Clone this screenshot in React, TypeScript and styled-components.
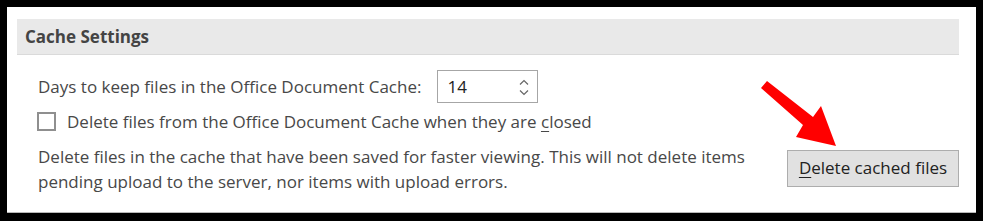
import React from "react"
import styled, { createGlobalStyle } from "styled-components"

const GlobalStyle = createGlobalStyle`
  html, body {
    margin: 0;
    padding: 0;
    background: #000;
  }
  body {
    font-family: "Open Sans", "Noto Sans", sans-serif;
  }
`

const Frame = styled.div`
  position: relative;
  box-sizing: border-box;
  width: 969px;
  height: 206px;
  margin: 7px 0 0 7px;
  background: #fff;
  border-bottom: 1px solid #b8b8b8;
  padding: 12px 17px 0 10px;
`

const Header = styled.div`
  box-sizing: border-box;
  height: 36px;
  background: #e9e9e9;
  border-bottom: 1px solid #dadada;
  display: flex;
  align-items: center;
  padding: 0 0 1px 8px;
  font-size: 17px;
  font-weight: 700;
  color: #444;
`

const Body = styled.div`
  padding: 15px 0 0 21px;
  font-size: 17px;
  color: #484848;
`

const Row = styled.div<{ $gap?: number }>`
  display: flex;
  align-items: center;
  gap: ${(p) => p.$gap ?? 10}px;
  height: 33px;
`

const NumberBox = styled.div`
  box-sizing: border-box;
  width: 101px;
  height: 33px;
  border: 1px solid #a6a6a6;
  display: flex;
  align-items: center;
  justify-content: space-between;
  padding: 0 8px 0 9px;
  color: #222;
`

const Spinner = styled.div`
  display: flex;
  flex-direction: column;
  gap: 5px;
  margin-top: 1px;
`

const Box = styled.span`
  box-sizing: border-box;
  width: 19px;
  height: 19px;
  border: 2px solid #8f8f8f;
  margin-left: -1px;
`

const CheckRow = styled(Row)`
  margin-top: 6px;
  height: 24px;
`

const Key = styled.span`
  text-decoration: underline;
  text-underline-offset: 3px;
  text-decoration-thickness: 1px;
`

const Bottom = styled.div`
  display: flex;
  justify-content: space-between;
  align-items: flex-start;
  margin-top: 11px;
`

const Note = styled.p`
  margin: 0;
  line-height: 25px;
`

const Action = styled.button`
  box-sizing: border-box;
  width: 172px;
  height: 37px;
  margin-top: 6px;
  background: #e1e1e1;
  border: 1px solid #adadad;
  font-family: inherit;
  font-size: 17px;
  color: #222;
  padding: 0 0 2px;
`

const Arrow = styled.svg`
  position: absolute;
  left: 0;
  top: 0;
  pointer-events: none;
`

const Chevron = ({ up }: { up?: boolean }) => (
  <svg width="10" height="6" viewBox="0 0 10 6">
    <path
      d={up ? "M1 5.5 L5 1.5 L9 5.5" : "M1 0.5 L5 4.5 L9 0.5"}
      fill="none"
      stroke="#666"
      strokeWidth="1.2"
    />
  </svg>
)

export default function App() {
  return (
    <>
      <GlobalStyle />
      <Frame>
        <Header>Cache Settings</Header>
        <Body>
          <Row $gap={16}>
            <span>Days to keep files in the Office Document Cache:</span>
            <NumberBox>
              <span>14</span>
              <Spinner>
                <Chevron up />
                <Chevron />
              </Spinner>
            </NumberBox>
          </Row>
          <CheckRow $gap={11}>
            <Box />
            <span>
              Delete files from the Office Document Cache when they are <Key>c</Key>losed
            </span>
          </CheckRow>
          <Bottom>
            <Note>
              Delete files in the cache that have been saved for faster viewing. This will not delete items
              <br />
              pending upload to the server, nor items with upload errors.
            </Note>
            <Action>
              <Key>D</Key>elete cached files
            </Action>
          </Bottom>
        </Body>
        <Arrow width="969" height="206" viewBox="7 7 969 206">
          <polygon
            points="767,81 813,117 821,106 836,146 796,137 803,125 761,88"
            fill="#ff0000"
          />
        </Arrow>
      </Frame>
    </>
  )
}
